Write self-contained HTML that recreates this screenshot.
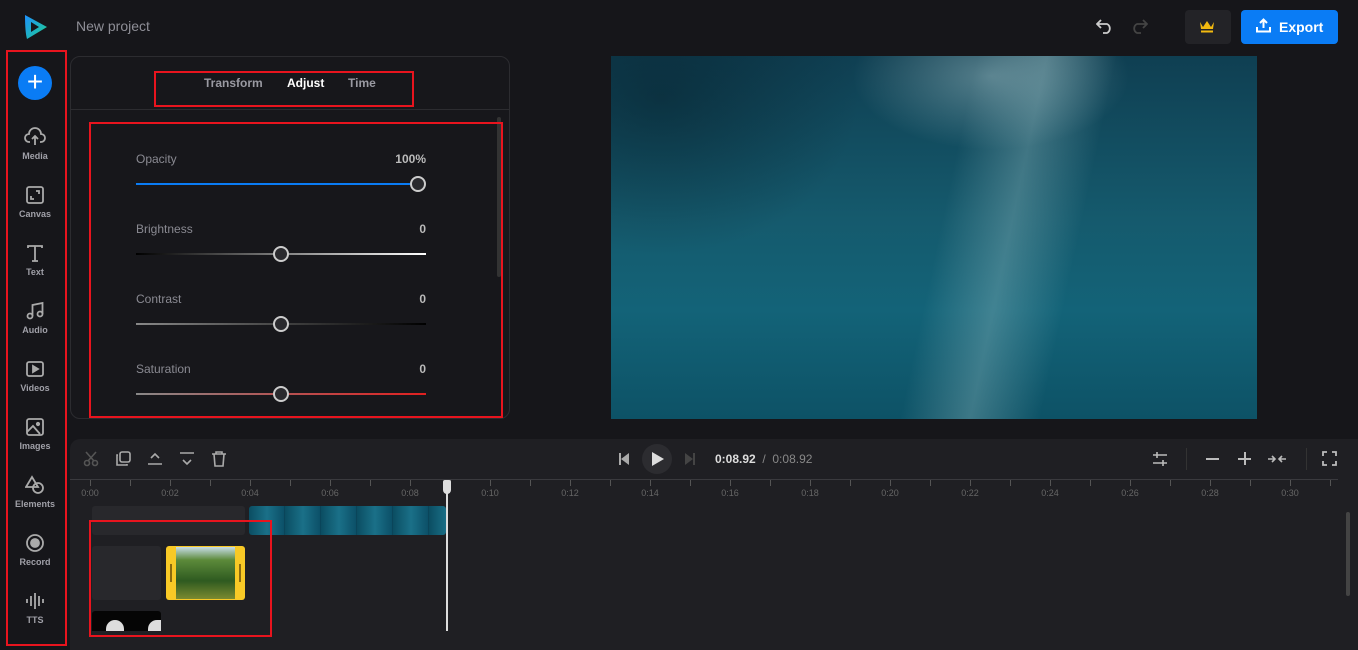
<!DOCTYPE html>
<html><head><meta charset="utf-8"><style>
*{margin:0;padding:0;box-sizing:border-box}
body{width:1358px;height:650px;background:#16161a;font-family:"Liberation Sans",sans-serif;position:relative;overflow:hidden;color:#ccc}
.a{position:absolute}
.red{position:absolute;border:2px solid #e8141e}
.sb{position:absolute;left:7px;width:56px;text-align:center;font-size:9px;font-weight:bold;color:#a0a0a8}
.sb svg{display:block;margin:0 auto 4px}
.lbl{position:absolute;font-size:12px;color:#8a8a92}
.val{position:absolute;font-size:12px;font-weight:bold;color:#bbb;text-align:right;width:60px}
.knob{position:absolute;width:16px;height:16px;border-radius:50%;border:2px solid #ccc;background:#2a2a2e}
.tk{position:absolute;top:480px;width:1px;height:6px;background:#555}
.tl{position:absolute;top:488px;font-size:9px;color:#666;width:40px;text-align:center}
</style></head><body>
<svg class="a" style="left:24px;top:14px" width="24" height="26" viewBox="0 0 24 26"><defs><linearGradient id="g" x1="0" y1="0" x2="1" y2="1"><stop offset="0" stop-color="#1e90ff"/><stop offset="1" stop-color="#1fd18a"/></linearGradient></defs><path d="M1 1 L23 13 L3 25 Q1 18 1 1Z M7 8 L7 18 L15 13Z" fill="url(#g)" fill-rule="evenodd"/></svg>
<div class="a" style="left:76px;top:18px;font-size:14px;color:#8e8e96">New project</div>
<svg class="a" style="left:1096px;top:18px" width="18" height="16" viewBox="0 0 18 16" fill="none" stroke="#ccc" stroke-width="1.8"><path d="M5 2 L1 6 L5 10 M1 6 H11 A5 5 0 0 1 11 15 H7"/></svg>
<svg class="a" style="left:1130px;top:18px" width="18" height="16" viewBox="0 0 18 16" fill="none" stroke="#444" stroke-width="1.8"><path d="M13 2 L17 6 L13 10 M17 6 H7 A5 5 0 0 0 7 15 H11"/></svg>
<div class="a" style="left:1185px;top:10px;width:46px;height:34px;background:#232327;border-radius:4px"></div>
<svg class="a" style="left:1199px;top:19px" width="16" height="14" viewBox="0 0 16 14"><path d="M1 3 L4 8 L8 2 L12 8 L15 3 L14 10 H2Z" fill="#f2b90f"/><rect x="2" y="11.5" width="12" height="2" fill="#f2b90f"/></svg>
<div class="a" style="left:1241px;top:10px;width:97px;height:34px;background:#0a7cf5;border-radius:4px;color:#fff;font-weight:bold;font-size:14px;line-height:34px;padding-left:38px">Export</div>
<svg class="a" style="left:1256px;top:18px" width="15" height="15" viewBox="0 0 15 15" fill="none" stroke="#fff" stroke-width="2"><path d="M7.5 10 V2 M4 5 L7.5 1.5 L11 5 M1 9 V13.5 H14 V9"/></svg>

<div class="red" style="left:6px;top:50px;width:61px;height:596px"></div>
<div class="a" style="left:18px;top:66px;width:34px;height:34px;border-radius:50%;background:#0a7cf5;color:#fff;font-size:28px;line-height:32px;text-align:center">+</div>
<div class="sb" style="top:127px"><svg width="22" height="20" viewBox="0 0 22 20" fill="none" stroke="#aaa" stroke-width="1.8"><path d="M6 15 H5 A4 4 0 0 1 5 7 A6 6 0 0 1 17 7 A4 4 0 0 1 17 15 H16 M11 18 V9 M8 12 L11 9 L14 12"/></svg>Media</div>
<div class="sb" style="top:185px"><svg width="20" height="20" viewBox="0 0 20 20" fill="none" stroke="#aaa" stroke-width="1.8"><rect x="2" y="2" width="16" height="16" rx="2"/><path d="M6 11 V14 H9 M14 9 V6 H11"/></svg>Canvas</div>
<div class="sb" style="top:243px"><svg width="20" height="20" viewBox="0 0 20 20" fill="none" stroke="#aaa" stroke-width="1.8"><path d="M3 5 V3 H17 V5 M10 3 V18 M7 18 H13"/></svg>Text</div>
<div class="sb" style="top:301px"><svg width="20" height="20" viewBox="0 0 20 20" fill="none" stroke="#aaa" stroke-width="1.8"><circle cx="5" cy="15" r="2.5"/><circle cx="15" cy="13" r="2.5"/><path d="M7.5 15 V4 L17.5 2 V13"/></svg>Audio</div>
<div class="sb" style="top:359px"><svg width="20" height="20" viewBox="0 0 20 20" fill="none" stroke="#aaa" stroke-width="1.8"><rect x="2" y="3" width="16" height="14" rx="2"/><path d="M8 7 L13 10 L8 13Z" fill="#aaa"/></svg>Videos</div>
<div class="sb" style="top:417px"><svg width="20" height="20" viewBox="0 0 20 20" fill="none" stroke="#aaa" stroke-width="1.8"><rect x="2" y="2" width="16" height="16" rx="2"/><path d="M2 15 L8 9 L15 17"/><circle cx="13" cy="7" r="1.2" fill="#aaa"/></svg>Images</div>
<div class="sb" style="top:475px"><svg width="20" height="20" viewBox="0 0 20 20" fill="none" stroke="#aaa" stroke-width="1.8"><path d="M7 2 L13 12 H1Z"/><circle cx="13" cy="13" r="5"/></svg>Elements</div>
<div class="sb" style="top:533px"><svg width="20" height="20" viewBox="0 0 20 20" fill="none" stroke="#aaa" stroke-width="1.8"><circle cx="10" cy="10" r="8"/><circle cx="10" cy="10" r="4" fill="#aaa"/></svg>Record</div>
<div class="sb" style="top:591px"><svg width="20" height="20" viewBox="0 0 20 20" stroke="#aaa" stroke-width="1.8"><path d="M2 8 V12 M6 5 V15 M10 2 V18 M14 5 V15 M18 8 V12"/></svg>TTS</div>

<div class="a" style="left:70px;top:56px;width:440px;height:363px;border:1px solid #2c2c30;border-radius:10px;background:#17171b"></div>
<div class="a" style="left:71px;top:109px;width:438px;height:1px;background:#2c2c30"></div>
<div class="a" style="left:204px;top:76px;font-size:12px;font-weight:bold;color:#9a9aa2">Transform</div>
<div class="a" style="left:287px;top:76px;font-size:12px;font-weight:bold;color:#fff">Adjust</div>
<div class="a" style="left:348px;top:76px;font-size:12px;font-weight:bold;color:#9a9aa2">Time</div>
<div class="red" style="left:154px;top:71px;width:260px;height:36px"></div>
<div class="a" style="left:497px;top:117px;width:4px;height:160px;background:#333;border-radius:2px"></div>
<div class="red" style="left:89px;top:122px;width:414px;height:296px"></div>
<div class="lbl" style="left:136px;top:152px">Opacity</div><div class="val" style="left:366px;top:152px">100%</div>
<div class="a" style="left:136px;top:183px;width:282px;height:2px;background:#0a7cf5"></div><div class="knob" style="left:410px;top:176px"></div>
<div class="lbl" style="left:136px;top:222px">Brightness</div><div class="val" style="left:366px;top:222px">0</div>
<div class="a" style="left:136px;top:253px;width:290px;height:2px;background:linear-gradient(90deg,#000,#fff)"></div><div class="knob" style="left:273px;top:246px"></div>
<div class="lbl" style="left:136px;top:292px">Contrast</div><div class="val" style="left:366px;top:292px">0</div>
<div class="a" style="left:136px;top:323px;width:290px;height:2px;background:linear-gradient(90deg,#888,#000)"></div><div class="knob" style="left:273px;top:316px"></div>
<div class="lbl" style="left:136px;top:362px">Saturation</div><div class="val" style="left:366px;top:362px">0</div>
<div class="a" style="left:136px;top:393px;width:290px;height:2px;background:linear-gradient(90deg,#888,#e02020)"></div><div class="knob" style="left:273px;top:386px"></div>

<div class="a" style="left:611px;top:56px;width:646px;height:363px;overflow:hidden;background:linear-gradient(180deg,#0f3f52 0%,#155a6d 45%,#136378 70%,#0d5266 100%)">
<div class="a" style="left:330px;top:-40px;width:140px;height:420px;background:linear-gradient(90deg,transparent,rgba(150,190,195,.35),transparent);transform:skewX(-12deg)"></div>
<div class="a" style="left:230px;top:-60px;width:300px;height:160px;background:radial-gradient(ellipse,rgba(170,200,205,.45),transparent 65%)"></div>
<div class="a" style="left:0;top:0;width:250px;height:200px;background:radial-gradient(ellipse at 20% 20%,rgba(5,25,35,.45),transparent 70%)"></div>
</div>

<div class="a" style="left:70px;top:439px;width:1288px;height:211px;background:#1f1f23;border-radius:10px 0 0 0"></div>
<svg class="a" style="left:83px;top:451px" width="16" height="16" viewBox="0 0 16 16" fill="none" stroke="#555" stroke-width="1.6"><circle cx="4" cy="12" r="2.5"/><circle cx="12" cy="12" r="2.5"/><path d="M3 1 L11 10 M13 1 L5 10"/></svg>
<svg class="a" style="left:115px;top:451px" width="16" height="16" viewBox="0 0 16 16" fill="none" stroke="#aaa" stroke-width="1.6"><rect x="5" y="1" width="10" height="10" rx="2"/><path d="M3 4 H2 V14 H12 V13"/></svg>
<svg class="a" style="left:147px;top:451px" width="16" height="16" viewBox="0 0 16 16" fill="none" stroke="#aaa" stroke-width="1.6"><path d="M4 7 L8 3 L12 7 M1 13 H15"/></svg>
<svg class="a" style="left:179px;top:451px" width="16" height="16" viewBox="0 0 16 16" fill="none" stroke="#aaa" stroke-width="1.6"><path d="M1 2 H15 M4 9 L8 13 L12 9"/></svg>
<svg class="a" style="left:211px;top:451px" width="16" height="16" viewBox="0 0 16 16" fill="none" stroke="#aaa" stroke-width="1.6"><path d="M1 3 H15 M5 3 V1 H11 V3 M3 3 L4 15 H12 L13 3"/></svg>
<svg class="a" style="left:619px;top:453px" width="10" height="12" viewBox="0 0 10 12" fill="#aaa"><rect x="0" y="0" width="2" height="12"/><path d="M10 0 V12 L2 6Z"/></svg>
<div class="a" style="left:642px;top:444px;width:30px;height:30px;border-radius:50%;background:#2c2c30"></div>
<svg class="a" style="left:652px;top:452px" width="12" height="14" viewBox="0 0 12 14" fill="#ddd"><path d="M0 0 L12 7 L0 14Z"/></svg>
<svg class="a" style="left:685px;top:453px" width="10" height="12" viewBox="0 0 10 12" fill="#444"><path d="M0 0 V12 L8 6Z"/><rect x="8" y="0" width="2" height="12"/></svg>
<div class="a" style="left:715px;top:452px;font-size:12px;color:#ddd"><b>0:08.92</b> <span style="color:#888;font-weight:normal">&nbsp;/&nbsp; 0:08.92</span></div>
<svg class="a" style="left:1152px;top:451px" width="16" height="16" viewBox="0 0 16 16" stroke="#bbb" stroke-width="1.6"><path d="M1 4 H15 M5 1 V7 M1 12 H15 M11 9 V15"/></svg>
<div class="a" style="left:1186px;top:448px;width:1px;height:22px;background:#333"></div>
<div class="a" style="left:1206px;top:458px;width:13px;height:2px;background:#bbb"></div>
<div class="a" style="left:1238px;top:458px;width:13px;height:2px;background:#bbb"></div><div class="a" style="left:1243.5px;top:452px;width:2px;height:13px;background:#bbb"></div>
<svg class="a" style="left:1267px;top:452px" width="20" height="14" viewBox="0 0 20 14" fill="none" stroke="#bbb" stroke-width="1.6"><path d="M1 7 H8 M5 4 L8 7 L5 10 M19 7 H12 M15 4 L12 7 L15 10"/></svg>
<div class="a" style="left:1306px;top:448px;width:1px;height:22px;background:#333"></div>
<svg class="a" style="left:1322px;top:451px" width="15" height="15" viewBox="0 0 15 15" fill="none" stroke="#bbb" stroke-width="1.8"><path d="M1 5 V1 H5 M10 1 H14 V5 M14 10 V14 H10 M5 14 H1 V10"/></svg>
<div class="a" style="left:70px;top:479px;width:1268px;height:1px;background:#3a3a3e"></div>
<div id="ruler"></div>
<div class="a" style="left:92px;top:506px;width:153px;height:29px;background:#28282c;border-radius:3px"></div>
<div class="a" style="left:249px;top:506px;width:197px;height:29px;border-radius:3px;background:repeating-linear-gradient(90deg,#0b4d62 0,#1a7088 18px,#0c5068 35px,#083a4c 36px)"></div>
<div class="a" style="left:92px;top:546px;width:69px;height:54px;background:#28282c;border-radius:3px"></div>
<div class="a" style="left:166px;top:546px;width:79px;height:54px;background:#f8c926;border-radius:3px"></div>
<div class="a" style="left:176px;top:547px;width:59px;height:52px;background:linear-gradient(180deg,#c8dde8 0%,#5c8a3a 25%,#2e5a20 65%,#7a8a30 100%)"></div>
<div class="a" style="left:170px;top:564px;width:2px;height:18px;background:#8a6a10"></div><div class="a" style="left:239px;top:564px;width:2px;height:18px;background:#8a6a10"></div>
<div class="a" style="left:92px;top:611px;width:69px;height:20px;background:#050505;border-radius:3px 3px 0 0"></div>
<div class="a" style="left:106px;top:620px;width:18px;height:11px;background:#ddd;border-radius:9px 9px 0 0"></div>
<div class="a" style="left:148px;top:620px;width:13px;height:11px;background:#ddd;border-radius:9px 0 0 0"></div>
<div class="a" style="left:446px;top:484px;width:2px;height:147px;background:#ddd"></div>
<div class="a" style="left:443px;top:480px;width:8px;height:14px;background:#ddd;border-radius:2px 2px 4px 4px"></div>
<div class="red" style="left:89px;top:520px;width:183px;height:117px"></div>
<div class="a" style="left:1346px;top:512px;width:4px;height:84px;background:#444;border-radius:2px"></div>
<script>
var r=document.getElementById('ruler'),h='';
for(var i=0;i<=31;i++){var x=90+i*40;if(x>1338)break;h+='<div class="tk" style="left:'+x+'px"></div>';
if(i%2==0)h+='<div class="tl" style="left:'+(x-20)+'px">0:'+(i<10?'0':'')+i+'</div>';}
r.innerHTML=h;
</script>
</body></html>
